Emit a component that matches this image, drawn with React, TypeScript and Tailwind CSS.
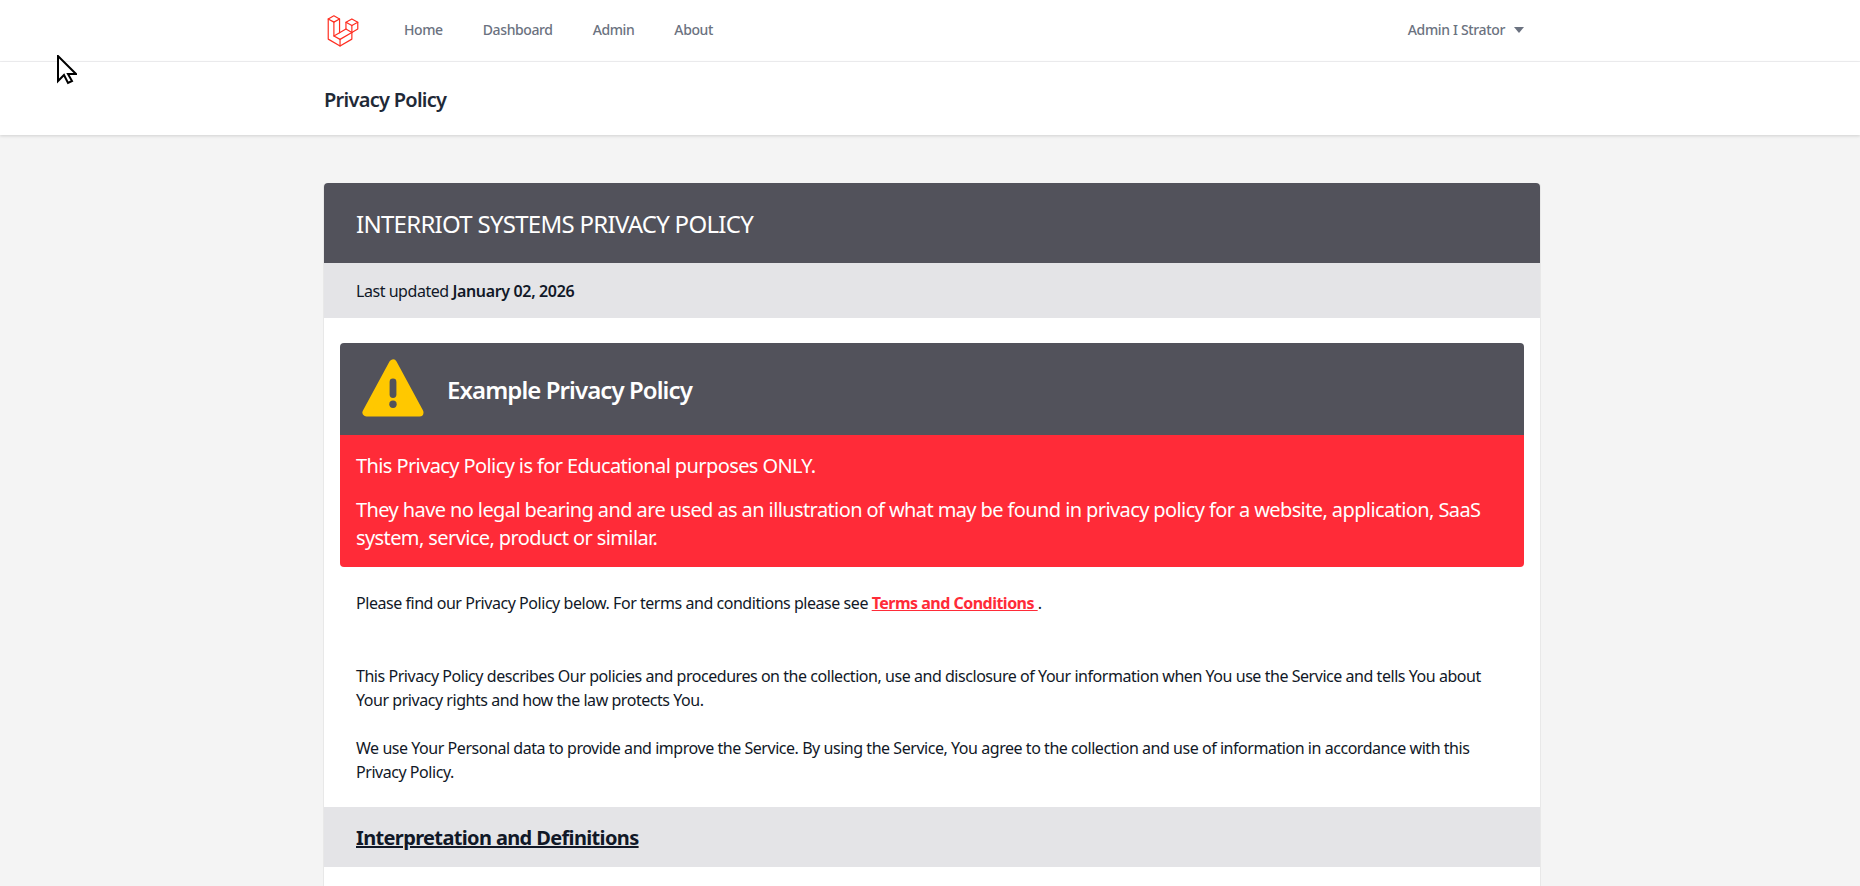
const navLinks = ['Home', 'Dashboard', 'Admin', 'About'];

function LaravelMark() {
  return (
    <svg viewBox="0 0 62 65" className="h-[32px] w-[32px] shrink-0" fill="none" stroke="#ff2d20" strokeWidth="2.4" strokeLinejoin="round" strokeLinecap="round">
      <path d="M1 8 12.5 1.5 24 8 12.5 14.5Z" />
      <path d="M1 8V49L25 63 49 49V36" />
      <path d="M12.5 14.5V42.5L25 49.5V63" />
      <path d="M24 8V36L12.5 42.5" />
      <path d="M24 36 37 28.5" />
      <path d="M25 49.5 49 35.5" />
      <path d="M37 14.8 49 8 61 14.8 49 21.5Z" />
      <path d="M37 14.8V28.5L49 35.5 61 28.5V14.8" />
      <path d="M49 21.5V35.5" />
    </svg>
  );
}

function WarningIcon() {
  return (
    <svg viewBox="0 0 62 58" className="mb-[3px] h-[58px] w-[62px] shrink-0">
      <path fill="#ffc800" stroke="#ffc800" strokeWidth="8" strokeLinejoin="round" d="M31 4.5 4.5 53.5H57.5Z" />
      <rect x="27.6" y="19.5" width="6.8" height="19.5" rx="3.4" fill="#52525b" />
      <circle cx="31" cy="45.3" r="3.7" fill="#52525b" />
    </svg>
  );
}

function Cursor() {
  return (
    <svg viewBox="0 0 20 30" className="absolute left-[57px] top-[55px] h-[30px] w-[20px]" fill="#fff" stroke="#000" strokeWidth="2">
      <path d="M1 1V26L7 20 11 28 15 26 11 19H19Z" />
    </svg>
  );
}

export default function App() {
  return (
    <div className="relative h-[886px] overflow-hidden bg-[#f4f4f4] font-['Noto_Sans',sans-serif] text-[16px] tracking-[-0.0285em] text-[#111827]">
      <Cursor />

      <nav className="h-[62px] border-b border-[#f0f0f2] bg-white">
        <div className="flex h-[61px] w-[1540px] items-center pl-[327px]">
          <LaravelMark />
          <div className="mb-[2px] ml-[45px] flex items-center gap-[40px] text-[14px] font-medium tracking-[-0.028em] text-[#6b7280]">
            {navLinks.map((link) => (
              <a key={link}>{link}</a>
            ))}
          </div>
          <div className="mb-[2px] ml-auto mr-[16px] flex items-center gap-[9px] text-[14px] font-medium tracking-[-0.025em] text-[#6b7280]">
            Admin I Strator
            <svg viewBox="0 0 10 6" className="h-[6px] w-[10px]" fill="#6b7280">
              <path d="M0 0H10L5 6Z" />
            </svg>
          </div>
        </div>
      </nav>

      <header className="flex h-[73px] items-center bg-white pl-[324px] shadow-[0_1px_3px_rgba(0,0,0,0.15)]">
        <h1 className="pt-[2px] text-[20px] font-semibold tracking-[-0.036em] text-[#1f2937]">Privacy Policy</h1>
      </header>

      <main className="ml-[323px] mt-[48px] w-[1218px] rounded-t border-x border-[#e8e8e8] bg-white">
        <div className="flex h-[80px] items-center rounded-t bg-[#52525b] pl-[32px] pt-[2px] text-[24px] tracking-[-0.03em] text-white">
          INTERRIOT SYSTEMS PRIVACY POLICY
        </div>
        <div className="flex h-[55px] items-center bg-[#e4e4e7] pl-[32px]">
          <p>
            Last updated <strong className="font-semibold tracking-[-0.022em]">January 02, 2026</strong>
          </p>
        </div>

        <div className="px-4 pt-[25px]">
          <div className="flex h-[92px] items-center rounded-t bg-[#52525b] pl-[22px] text-white">
            <WarningIcon />
            <span className="ml-[23px] pt-[2px] text-[24px] font-semibold tracking-[-0.038em]">Example Privacy Policy</span>
          </div>
          <div className="rounded-b bg-[#ff2b38] px-4 pb-[15px] pt-[17px] text-[20px] leading-[28px] tracking-[-0.03em] text-white">
            <p>This Privacy Policy is for Educational purposes ONLY.</p>
            <p className="mt-[16px]">
              They have no legal bearing and are used as an illustration of what may be found in privacy policy for a website, application, SaaS system, service, product or similar.
            </p>
          </div>
        </div>

        <div className="px-[32px] pt-[24px] leading-[24px]">
          <p>
            Please find our Privacy Policy below. For terms and conditions please see{' '}
            <a className="font-bold tracking-[-0.032em] text-[#ff2b38] underline">Terms and Conditions </a>.
          </p>
          <p className="mt-[49px]">
            This Privacy Policy describes Our policies and procedures on the collection, use and disclosure of Your information when You use the Service and tells You about Your privacy rights and how the law protects You.
          </p>
          <p className="mt-[24px]">
            We use Your Personal data to provide and improve the Service. By using the Service, You agree to the collection and use of information in accordance with this Privacy Policy.
          </p>
        </div>

        <div className="mt-[23px] flex h-[60px] items-center bg-[#e4e4e7] pl-[32px] pt-[2px]">
          <h2 className="text-[20px] font-bold tracking-[-0.032em] underline">Interpretation and Definitions</h2>
        </div>
        <div className="h-[40px]" />
      </main>
    </div>
  );
}
